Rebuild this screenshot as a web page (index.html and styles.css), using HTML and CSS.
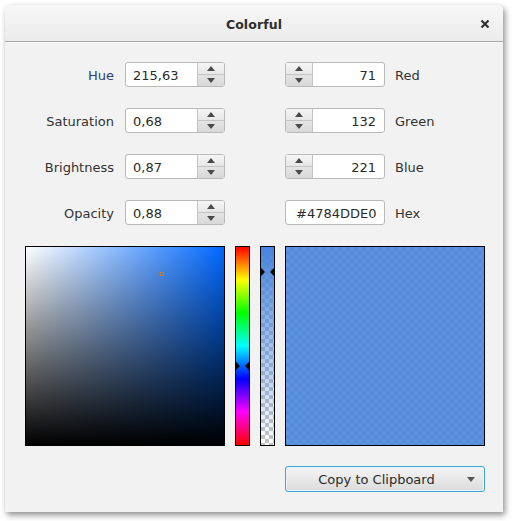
FILE: index.html
```html
<!DOCTYPE html>
<html>
<head>
<meta charset="utf-8">
<link rel="stylesheet" href="styles.css">
</head>
<body>
<div class="window">
  <div class="titlebar">
    <span class="title">Colorful</span>
    <svg class="close" width="10" height="10" viewBox="0 0 10 10"><path d="M1.5 1.5 L8.5 8.5 M8.5 1.5 L1.5 8.5" stroke="#333" stroke-width="2.2" stroke-linecap="butt"/></svg>
  </div>
  <div class="content">
    <div class="fields">
      <div class="lbl lbl-l hue">Hue</div>
      <div class="spin"><span class="val">215,63</span><span class="btns"><span class="b up"></span><span class="b down"></span></span></div>
      <div class="gapcol"></div>
      <div class="spin spin-r"><span class="btns"><span class="b up"></span><span class="b down"></span></span><span class="val">71</span></div>
      <div class="lbl lbl-r">Red</div>

      <div class="lbl lbl-l">Saturation</div>
      <div class="spin"><span class="val">0,68</span><span class="btns"><span class="b up"></span><span class="b down"></span></span></div>
      <div class="gapcol"></div>
      <div class="spin spin-r"><span class="btns"><span class="b up"></span><span class="b down"></span></span><span class="val">132</span></div>
      <div class="lbl lbl-r">Green</div>

      <div class="lbl lbl-l">Brightness</div>
      <div class="spin"><span class="val">0,87</span><span class="btns"><span class="b up"></span><span class="b down"></span></span></div>
      <div class="gapcol"></div>
      <div class="spin spin-r"><span class="btns"><span class="b up"></span><span class="b down"></span></span><span class="val">221</span></div>
      <div class="lbl lbl-r">Blue</div>

      <div class="lbl lbl-l">Opacity</div>
      <div class="spin"><span class="val">0,88</span><span class="btns"><span class="b up"></span><span class="b down"></span></span></div>
      <div class="gapcol"></div>
      <div class="hexfield">#4784DDE0</div>
      <div class="lbl lbl-r">Hex</div>
    </div>

    <div class="panels">
      <div class="sb">
        <div class="sb-white"><div class="sb-black"></div></div>
        <span class="sb-mark" style="left:134px;top:25px"></span>
      </div>
      <div class="bar huebar">
        <span class="mk mk-l" style="top:115px"></span>
        <span class="mk mk-r" style="top:115px"></span>
      </div>
      <div class="bar alphabar">
        <span class="mk mk-l" style="top:21px"></span>
        <span class="mk mk-r" style="top:21px"></span>
      </div>
      <div class="preview"></div>
    </div>

    <div class="actions">
      <div class="copybtn">
        <span class="copylabel">Copy to Clipboard</span>
        <span class="caret"></span>
      </div>
    </div>
  </div>
</div>
</body>
</html>
```
FILE: styles.css
```css
html, body {
  margin: 0;
  padding: 0;
  background: #ffffff;
}
body {
  font-family: "DejaVu Sans", "Liberation Sans", sans-serif;
  font-size: 13px;
  color: #333333;
  height: 521px;
}
.window {
  margin: 5px 0 0 5px;
  width: 498px;
  height: 507px;
  background: #f2f2f2;
  border-radius: 5px 5px 0 0;
  box-shadow: 2px 3px 6px rgba(0, 0, 0, 0.45);
  box-sizing: border-box;
  display: flex;
  flex-direction: column;
}
.titlebar {
  height: 37px;
  flex: none;
  border-bottom: 1px solid #a6a6a6;
  background: linear-gradient(to bottom, #f7f7f7, #ececec);
  border-radius: 5px 5px 0 0;
  display: flex;
  align-items: center;
  justify-content: center;
  position: relative;
  box-shadow: 0 1px 0 #fafafa;
  box-sizing: border-box;
  padding-top: 2px;
}
.title {
  font-weight: bold;
  font-size: 12.5px;
  color: #2e2e2e;
  letter-spacing: 0.1px;
}
.close {
  position: absolute;
  right: 13px;
  top: 14px;
}
.content {
  padding: 20px 18px 0 20px;
  display: flex;
  flex-direction: column;
}
.fields {
  display: grid;
  grid-template-columns: 100px 100px 60px 100px auto;
  grid-auto-rows: 25px;
  row-gap: 21px;
  align-items: center;
}
.lbl {
  line-height: 25px;
  padding-top: 1px;
  white-space: nowrap;
}
.lbl-l {
  text-align: right;
  padding-right: 11px;
}
.lbl-r {
  padding-left: 10px;
}
.hue {
  color: #2a3e78;
}
.spin {
  height: 25px;
  box-sizing: border-box;
  border: 1px solid #b9b9b9;
  border-radius: 3px;
  background: #ffffff;
  display: flex;
  overflow: hidden;
}
.val {
  flex: 1;
  line-height: 23px;
  padding: 1px 7px 0;
  color: #2b2b2b;
}
.spin-r .val {
  text-align: right;
  padding-right: 8px;
}
.btns {
  width: 26px;
  display: flex;
  flex-direction: column;
  border-left: 1px solid #c4c4c4;
  background: linear-gradient(to bottom, #f4f4f4, #dedede);
}
.spin-r .btns {
  border-left: none;
  border-right: 1px solid #c4c4c4;
}
.b {
  flex: 1;
  display: flex;
  align-items: center;
  justify-content: center;
}
.b.up {
  border-bottom: 1px solid #c4c4c4;
  background: linear-gradient(to bottom, #f6f6f6, #e6e6e6);
}
.b.down {
  background: linear-gradient(to bottom, #e4e4e4, #d8d8d8);
}
.b.up::before {
  content: "";
  border-left: 4px solid transparent;
  border-right: 4px solid transparent;
  border-bottom: 5px solid #4a4a4a;
  margin-top: -1px;
}
.b.down::before {
  content: "";
  border-left: 4px solid transparent;
  border-right: 4px solid transparent;
  border-top: 5px solid #4a4a4a;
}
.hexfield {
  height: 25px;
  box-sizing: border-box;
  border: 1px solid #b9b9b9;
  border-radius: 3px;
  background: #ffffff;
  line-height: 23px;
  padding: 1px 0 0 10px;
  color: #2b2b2b;
  white-space: nowrap;
  overflow: hidden;
}
.panels {
  margin-top: 21px;
  display: flex;
  gap: 10px;
  height: 200px;
}
.sb {
  width: 200px;
  height: 200px;
  box-sizing: border-box;
  border: 1px solid #000;
  background: rgb(0, 104, 255);
  position: relative;
}
.sb-white {
  width: 100%;
  height: 100%;
  background: linear-gradient(to right, #ffffff, rgba(255,255,255,0));
}
.sb-black {
  width: 100%;
  height: 100%;
  background: linear-gradient(to bottom, rgba(0,0,0,0), #000000);
}
.sb-mark {
  position: absolute;
  width: 2px;
  height: 2px;
  border: 1px solid #c27a2c;
}
.bar {
  width: 15px;
  height: 200px;
  box-sizing: border-box;
  border: 1px solid #000;
  position: relative;
}
.huebar {
  background: linear-gradient(to bottom, #ff0000 0%, #ffff00 16.67%, #00ff00 33.33%, #00ffff 50%, #0000ff 66.67%, #ff00ff 83.33%, #ff0000 100%);
}
.alphabar {
  background:
    linear-gradient(to bottom, rgb(71,132,221), rgba(71,132,221,0)),
    conic-gradient(#c4c4c4 25%, #ffffff 0 50%, #c4c4c4 0 75%, #ffffff 0) 0 0 / 8px 8px;
}
.mk {
  position: absolute;
  width: 0;
  height: 0;
  border-top: 4px solid transparent;
  border-bottom: 4px solid transparent;
}
.mk-l {
  left: 0;
  border-left: 4px solid #000;
}
.mk-r {
  right: 0;
  border-right: 4px solid #000;
}
.preview {
  width: 200px;
  height: 200px;
  box-sizing: border-box;
  border: 1px solid #000;
  background:
    linear-gradient(rgba(71,132,221,0.88), rgba(71,132,221,0.88)),
    conic-gradient(#c4c4c4 25%, #ffffff 0 50%, #c4c4c4 0 75%, #ffffff 0) 0 0 / 8px 8px;
}
.actions {
  margin-top: 20px;
  display: flex;
  justify-content: flex-end;
}
.copybtn {
  width: 200px;
  height: 26px;
  box-sizing: border-box;
  border: 1px solid #3ea6dc;
  border-radius: 3px;
  background: linear-gradient(to bottom, #f4f4f4, #dcdcdc);
  box-shadow: inset 0 0 0 1px #e8f4fb;
  display: flex;
  align-items: center;
}
.copylabel {
  flex: 1;
  text-align: center;
  color: #2b2b2b;
  line-height: 24px;
  padding-top: 1px;
}
.caret {
  width: 0;
  height: 0;
  border-left: 4.5px solid transparent;
  border-right: 4.5px solid transparent;
  border-top: 5px solid #555555;
  margin: 0 9px 0 0;
}
```
